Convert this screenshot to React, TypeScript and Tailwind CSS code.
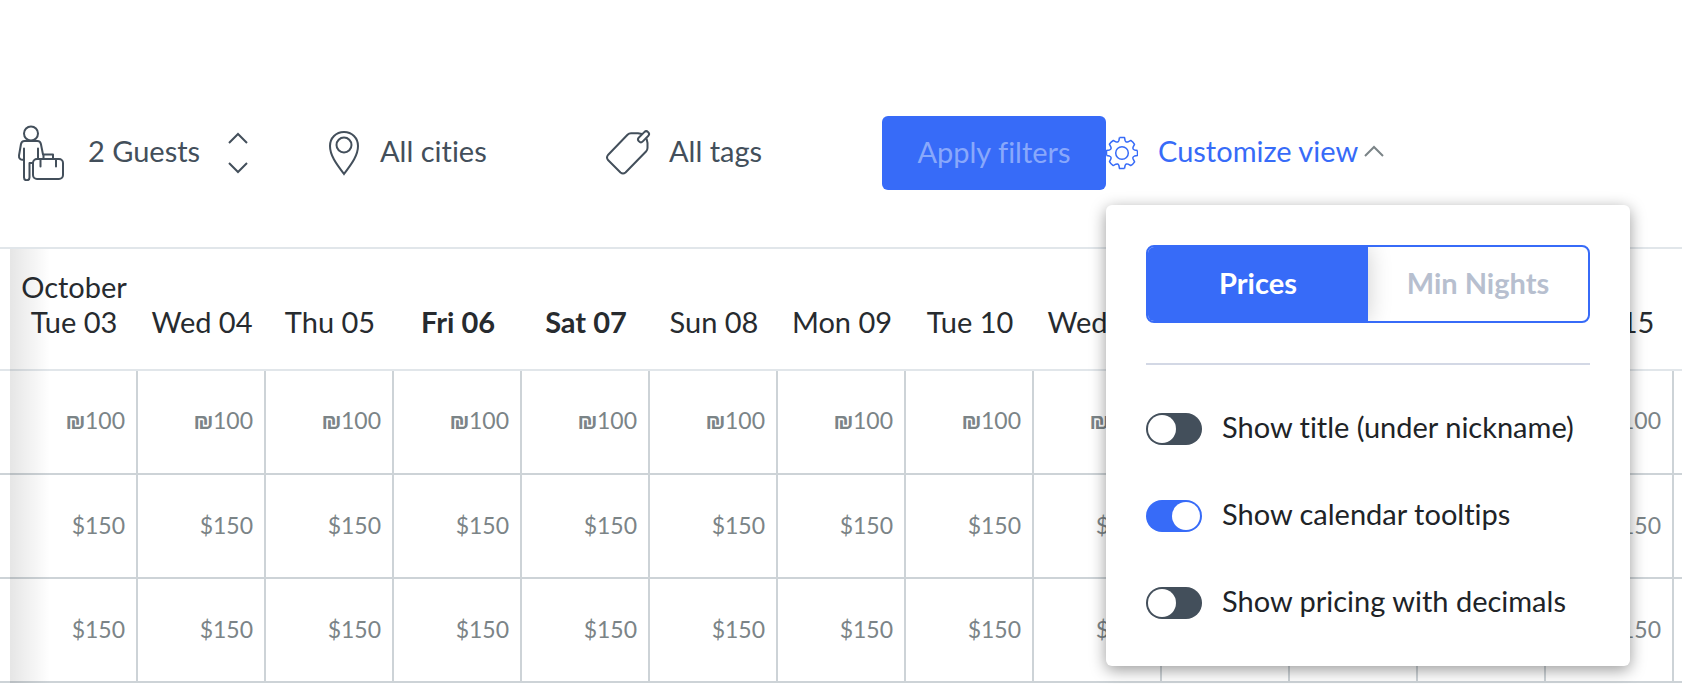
import { useState } from "react";

const days = [
  "Tue 03", "Wed 04", "Thu 05", "Fri 06", "Sat 07", "Sun 08", "Mon 09",
  "Tue 10", "Wed 11", "Thu 12", "Fri 13", "Sat 14", "Sun 15", "Mon 16",
];

const rows = [
  { currency: "₪", price: 100 },
  { currency: "$", price: 150 },
  { currency: "$", price: 150 },
];

const options = [
  { id: "title", label: "Show title (under nickname)", on: false },
  { id: "tooltips", label: "Show calendar tooltips", on: true },
  { id: "decimals", label: "Show pricing with decimals", on: false },
];

function GuestIcon() {
  return (
    <svg width="50" height="56" viewBox="0 0 50 56" fill="none" stroke="currentColor" strokeWidth="2" strokeLinecap="round" strokeLinejoin="round">
      <circle cx="15" cy="8.500" r="7" />
      <path d="M8 23.500v29a2.700 2.700 0 0 0 5.500 0V38h3.500" />
      <path d="M8 34.500c-3 1-5.500-1-5-4l2-11.500c.4-2 1.500-3 3.500-3h13c2 0 3 1 3.400 3l2.100 10.500" />
      <path d="M22 23.500v10M27.500 33v-3.500h9.500V33" />
      <rect x="17" y="34" width="30" height="20" rx="4" />
      <path d="M24.500 34v7.500M40 34v7.500" />
    </svg>
  );
}

function PinIcon() {
  return (
    <svg width="32" height="46" viewBox="0 0 32 46" fill="none" stroke="currentColor" strokeWidth="2">
      <path d="M16 44C11 37 2 27 2 16 2 8 8 2 16 2s14 6 14 14c0 11-9 21-14 28Z" />
      <circle cx="16" cy="15" r="7.500" />
    </svg>
  );
}

function TagIcon() {
  return (
    <svg width="46" height="46" viewBox="0 0 46 46" fill="none" stroke="currentColor" strokeWidth="2" strokeLinejoin="round">
      <path d="M37 4l-4-.7h-7q-2 0-3.500 1.500L3 25q-2 2.500 0 5l12.500 12.500q2.500 2 5 0L41 21.500q1.500-1.700 1.500-3.500V13l-1-4.500" />
      <rect x="32" y="4" width="13" height="5.500" rx="2.700" transform="rotate(-45 38.500 6.700)" />
    </svg>
  );
}

function GearIcon() {
  return (
    <svg width="32" height="34" viewBox="0 0 32 34" fill="none" stroke="currentColor" strokeWidth="1.500" strokeLinejoin="round">
      {[0, 90, 180, 270].map((angle) => (
        <path
          key={angle}
          transform={`rotate(${angle} 16 17)`}
          d="M13.500 1.500h5l.6 3Q20 6.800 22.100 5.800L24.800 4.400q2.500 1.600 3.700 3.900L27.200 10.900Q26.200 13 28.500 13.900L31.500 14.500"
        />
      ))}
      <circle cx="16" cy="17" r="6.300" />
    </svg>
  );
}

function Chevron({ down = false }: { down?: boolean }) {
  return (
    <svg width="20" height="12" viewBox="0 0 20 12" fill="none" stroke="currentColor" strokeWidth="2">
      <path d={down ? "M1 1l9 9 9-9" : "M1 11l9-9 9 9"} />
    </svg>
  );
}

function CustomizePanel() {
  const [mode, setMode] = useState("Prices");

  return (
    <div className="absolute left-0 top-full z-20 mt-[15px] w-[524px] rounded-md bg-white px-10 pb-[43px] pt-10 shadow-[0_4px_16px_rgba(0,0,0,0.4)]">
      <div className="flex h-[78px] overflow-hidden rounded-lg border-2 border-[#376bf8] font-bold">
        {["Prices", "Min Nights"].map((name) => (
          <button
            key={name}
            onClick={() => setMode(name)}
            className={mode === name ? "flex-1 bg-[#376bf8] pb-0.5 text-white shadow-[0_0_24px_rgba(0,0,0,0.2)]" : "flex-1 pb-0.5 text-[#b7bfcf]"}
          >
            {name}
          </button>
        ))}
      </div>
      <hr className="my-10 border-t-2 border-[#d3d8e5]" />
      <div className="flex flex-col gap-[47px] pt-1">
        {options.map((option) => (
          <div key={option.id} className="flex items-center gap-5 text-[#202327]">
            <input
              id={option.id}
              type="checkbox"
              role="switch"
              defaultChecked={option.on}
              className="h-8 w-14 shrink-0 appearance-none rounded-full bg-[#434f5b] p-0.5 before:block before:size-7 before:rounded-full before:bg-white checked:bg-[#376bf8] checked:before:ml-auto"
            />
            <label htmlFor={option.id} className="whitespace-nowrap pb-1 leading-9">{option.label}</label>
          </div>
        ))}
      </div>
    </div>
  );
}

export default function App() {
  const [guests, setGuests] = useState(2);

  return (
    <main className="h-screen overflow-hidden bg-white font-['Lato',sans-serif] text-[29px] leading-9 text-[#434f5b] [font-variant-ligatures:none]">
      <div className="flex items-center pb-[57px] pl-4 pt-[116px] whitespace-nowrap">
        <div className="flex w-[312px] items-center">
          <GuestIcon />
          <span className="ml-[22px] w-[140px] pb-1">{guests} Guests</span>
          <div className="flex flex-col gap-[18px]">
            <button aria-label="More guests" onClick={() => setGuests(guests + 1)}><Chevron /></button>
            <button aria-label="Fewer guests" onClick={() => setGuests(guests - 1)}><Chevron down /></button>
          </div>
        </div>
        <button className="flex w-[277px] items-center gap-5">
          <PinIcon />
          <span className="pb-1">All cities</span>
        </button>
        <button className="flex w-[277px] items-center gap-[18px]">
          <TagIcon />
          <span className="pb-1">All tags</span>
        </button>
        <button disabled className="h-[74px] w-56 rounded-md bg-[#376bf8] pb-0.5 text-[#89a8fb]">
          Apply filters
        </button>
        <div className="relative flex h-[74px] items-center">
          <button className="flex items-center text-[#376bf8]" aria-expanded="true">
            <GearIcon />
            <span className="ml-5 mr-1.5 pb-1">Customize view</span>
            <span className="pb-1 text-[#7b8487]"><Chevron /></span>
          </button>
          <CustomizePanel />
        </div>
      </div>

      <div className="relative border-t-2 border-[#e1e6ea]">
        <table className="w-max table-fixed border-separate border-spacing-0">
          <thead>
            <tr className="text-[#272b2f]">
              {days.map((day, i) => (
                <th
                  key={day}
                  scope="col"
                  className={`h-[122px] w-32 border-b-2 border-[#e1e6ea] p-0 pb-2.5 align-middle first:w-[138px] first:pl-2.5 ${/Fri|Sat/.test(day) ? "font-bold" : "font-normal"}`}
                >
                  <div className="h-[35px]">{i === 0 && "October"}</div>
                  <div>{day}</div>
                </th>
              ))}
            </tr>
          </thead>
          <tbody>
            {rows.map(({ currency, price }, i) => (
              <tr key={i}>
                {days.map((day) => (
                  <td key={day} className="h-[104px] border-b-2 border-r-2 border-[#cdd3d7] p-0 pb-0.5 pr-[11px] text-right text-[23px] text-[#7b8487]">
                    {currency === "₪" ? <span className="font-['Roboto',sans-serif] font-medium">₪</span> : currency}
                    {price}
                  </td>
                ))}
              </tr>
            ))}
          </tbody>
        </table>
        <div className="pointer-events-none absolute inset-y-0 left-[10px] w-10 bg-linear-to-r from-black/10 to-transparent" />
      </div>
    </main>
  );
}
